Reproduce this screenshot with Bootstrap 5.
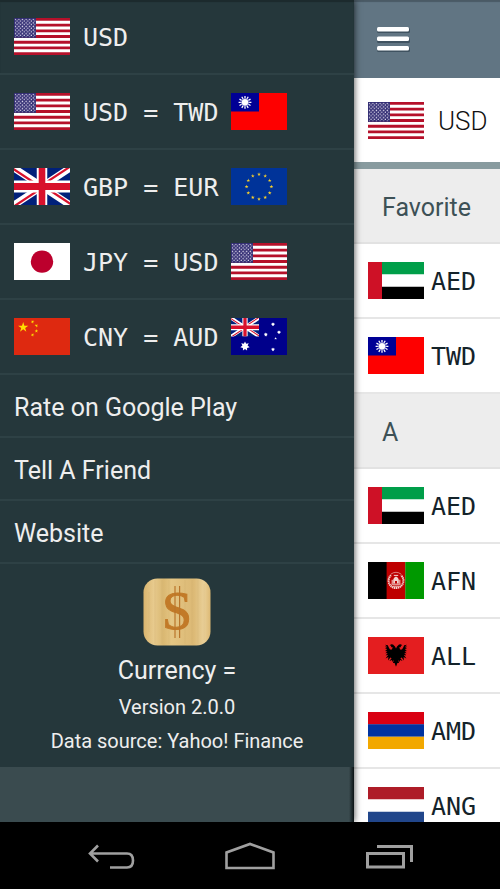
<!DOCTYPE html>
<html lang="en">
<head>
<meta charset="utf-8">
<meta name="viewport" content="width=device-width, initial-scale=1">
<title>Currency =</title>
<link href="https://cdn.jsdelivr.net/npm/bootstrap@5.3.0/dist/css/bootstrap.min.css" rel="stylesheet">
<style>
  body { font-family: Roboto, sans-serif; background: #000; }
  a { color: inherit; text-decoration: none; }
  .flag { width: 56px; height: 37px; flex: none; display: block; }
  .code { font-family: "DejaVu Sans Mono", monospace; font-size: 25px; line-height: 30px; white-space: nowrap; padding-top: 3px; }

  .panes { min-height: 0; }
  .drawer { width: 70.8%; flex: none; z-index: 1; background: #3a4b4f linear-gradient(to left, #0a1214, #3a4b4f 5px); color: #eee; box-shadow: 0 0 7px rgba(0,0,0,.75); }
  .drawer-row { background: #25373b; border-bottom: 2px solid #2e4145; padding: 0 14px; gap: 13px; }
  .drawer-row:first-child { box-shadow: inset 0 2px 1px #1c2a2d; }
  .pair-row { height: 75px; }
  .text-row { height: 63px; padding-top: 4px; font-size: 25px; line-height: 30px; }
  .drawer-about { background: #25373b; padding: 14px 0 13px; font-size: 20px; line-height: 26px; }
  .app-icon { width: 68px; height: 68px; }
  .app-name { font-size: 25px; line-height: 30px; margin-top: 10px; }

  .topbar { height: 78px; background: #617583; padding: 0 22px; box-shadow: inset 0 2px 1px #4a5a65; }
  .menu-icon { width: 34px; height: 27px; display: block; }
  .base-row { height: 91px; border-bottom: 7px solid #889b9f; padding: 0 14px; gap: 14px; color: #111; font-size: 26px; font-weight: 300; }
  .base-row span { padding-top: 3px; }
  .section-row { height: 75px; background: #ededed; border-bottom: 2px solid #e2e2e2; padding: 4px 28px 0; color: #3d5156; font-size: 25px; }
  .money-row { height: 75px; background: #fff; border-bottom: 2px solid #e6e6e6; padding: 0 14px; gap: 7px; color: #14232a; }

  .sysbar { height: 67px; flex: none; background: #000; padding: 0 42px; }
  .sysbar svg { display: block; width: 52px; height: 32px; fill: none; stroke: #a0a0a0; stroke-width: 3; }
</style>
<script src="https://cdn.jsdelivr.net/npm/bootstrap@5.3.0/dist/js/bootstrap.bundle.min.js"></script>
</head>
<body class="vh-100 d-flex flex-column overflow-hidden">

<svg width="0" height="0" class="position-absolute" aria-hidden="true">
  <defs>
    <polygon id="star" points="0,-1 .225,-.309 .951,-.309 .363,.118 .588,.809 0,.382 -.588,.809 -.363,.118 -.951,-.309 -.225,-.309"/>
    <polygon id="star7" points="0,-1 .24,-.5 .78,-.62 .54,-.12 .97,.22 .43,.35 .43,.9 0,.56 -.43,.9 -.43,.35 -.97,.22 -.54,-.12 -.78,-.62 -.24,-.5"/>
    <pattern id="dots" width="3.6" height="3.6" patternUnits="userSpaceOnUse">
      <circle cx="1.3" cy="1.3" r=".75" fill="#e4e0f0"/><circle cx="3.1" cy="3.1" r=".75" fill="#e4e0f0"/>
    </pattern>
    <clipPath id="ukclip"><path d="M28,18.5h28v18.5zv18.5h-28zh-28v-18.5zv-18.5h28z"/></clipPath>
    <clipPath id="ukbox"><path d="M0,0h56v37H0z"/></clipPath>
    <symbol id="us" viewBox="0 0 56 37">
      <path fill="#fff" d="M0,0h56v37H0z"/>
      <path stroke="#b5102a" stroke-width="2.85" d="M0,1.42h56M0,7.11h56M0,12.8h56M0,18.5h56M0,24.2h56M0,29.9h56M0,35.58h56"/>
      <path fill="#312c72" d="M0,0h22v19.9H0z"/><path fill="url(#dots)" d="M.8,.8h20.6v18.4H.8z"/>
    </symbol>
    <symbol id="uk" viewBox="0 0 56 37">
      <g clip-path="url(#ukbox)">
        <path fill="#00207a" d="M0,0h56v37H0z"/>
        <path stroke="#fff" stroke-width="7" d="M0,0L56,37M56,0L0,37"/>
        <path stroke="#d8112c" stroke-width="4.4" clip-path="url(#ukclip)" d="M0,0L56,37M56,0L0,37"/>
        <path stroke="#fff" stroke-width="12" d="M0,18.5h56"/><path stroke="#fff" stroke-width="10.5" d="M28,0v37"/>
        <path stroke="#d8112c" stroke-width="7" d="M0,18.5h56"/><path stroke="#d8112c" stroke-width="6.6" d="M28,0v37"/>
      </g>
    </symbol>
    <symbol id="tw" viewBox="0 0 56 37">
      <path fill="#fe0000" d="M0,0h56v37H0z"/><path fill="#000095" d="M0,0h28v18.5H0z"/>
      <g transform="translate(14 9.3)">
        <path stroke="#fff" stroke-width="1.3" d="M0,-6.4V6.4M-6.4,0H6.4M3.2,-5.54L-3.2,5.54M5.54,-3.2L-5.54,3.2M-3.2,-5.54L3.2,5.54M-5.54,-3.2L5.54,3.2"/>
        <circle r="3.8" fill="#fff" stroke="#000095" stroke-width=".5"/>
      </g>
    </symbol>
    <symbol id="eu" viewBox="0 0 56 37">
      <path fill="#003399" d="M0,0h56v37H0z"/>
      <g fill="#f7d02c" transform="translate(28 18.7)">
        <use href="#star" transform="translate(0 -12.4) scale(2)"/><use href="#star" transform="translate(6.2 -10.7) scale(2)"/>
        <use href="#star" transform="translate(10.7 -6.2) scale(2)"/><use href="#star" transform="translate(12.4 0) scale(2)"/>
        <use href="#star" transform="translate(10.7 6.2) scale(2)"/><use href="#star" transform="translate(6.2 10.7) scale(2)"/>
        <use href="#star" transform="translate(0 12.4) scale(2)"/><use href="#star" transform="translate(-6.2 10.7) scale(2)"/>
        <use href="#star" transform="translate(-10.7 6.2) scale(2)"/><use href="#star" transform="translate(-12.4 0) scale(2)"/>
        <use href="#star" transform="translate(-10.7 -6.2) scale(2)"/><use href="#star" transform="translate(-6.2 -10.7) scale(2)"/>
      </g>
    </symbol>
    <symbol id="jp" viewBox="0 0 56 37"><path fill="#fff" d="M0,0h56v37H0z"/><circle cx="28" cy="18.6" r="11.2" fill="#bc002d"/></symbol>
    <symbol id="cn" viewBox="0 0 56 37">
      <path fill="#de2910" d="M0,0h56v37H0z"/>
      <g fill="#ffde00">
        <use href="#star" transform="translate(9.2 9.3) scale(5.4)"/>
        <use href="#star" transform="translate(18.6 3.8) rotate(20) scale(1.9)"/><use href="#star" transform="translate(22.4 7.6) rotate(45) scale(1.9)"/>
        <use href="#star" transform="translate(22.4 13) scale(1.9)"/><use href="#star" transform="translate(18.6 16.9) rotate(20) scale(1.9)"/>
      </g>
    </symbol>
    <symbol id="au" viewBox="0 0 56 37">
      <path fill="#00008b" d="M0,0h56v37H0z"/>
      <use href="#uk" width="28" height="18.5"/>
      <g fill="#fff">
        <use href="#star7" transform="translate(14 28.2) scale(4.8)"/><use href="#star7" transform="translate(42 6.3) scale(2)"/>
        <use href="#star7" transform="translate(34.8 16.6) scale(2)"/><use href="#star7" transform="translate(48 14.2) scale(2)"/>
        <use href="#star" transform="translate(44.6 20.4) scale(1.5)"/><use href="#star7" transform="translate(42 31.4) scale(2)"/>
      </g>
    </symbol>
    <symbol id="ae" viewBox="0 0 56 37">
      <path fill="#fff" d="M0,0h56v37H0z"/><path fill="#009e49" d="M14,0h42v12.3H14z"/><path d="M14,24.7h42V37H14z"/><path fill="#ce1126" d="M0,0h14v37H0z"/>
    </symbol>
    <symbol id="af" viewBox="0 0 56 37">
      <path d="M0,0h19v37H0z"/><path fill="#be0000" d="M18.6,0h18.9v37H18.6z"/><path fill="#009900" d="M37.3,0H56v37H37.3z"/>
      <g fill="none" stroke="#f3d5d0" transform="translate(28 18.8)">
        <path stroke-width="2" stroke-dasharray="1.4 .5" d="M-5,-5.6A7.4,7.4 0 1 0 5,-5.6"/>
        <path stroke-width=".6" d="M-5.2,-6.6Q0,-10.4 5.2,-6.6"/>
        <path stroke-width="1" d="M-4.6,3.4h9.2M-3.8,-1v4M3.8,-1v4M-3.4,5.4h6.8M-2.2,-5.4h4.4"/>
        <path fill="#f3d5d0" stroke="none" d="M-2.8,2.6V-1Q-2.4,-3.4 0,-4.4Q2.4,-3.4 2.8,-1V2.6H1V.2H-1V2.6z"/>
      </g>
    </symbol>
    <symbol id="al" viewBox="0 0 56 37">
      <path fill="#e41e20" d="M0,0h56v37H0z"/>
      <path transform="translate(28 7)" d="M0,4.6L1,2.4L3,.4L5,.2L6.3,1.6L4.8,1.8L5,3.2L3.4,3L4,5.4L6,5.6L7.2,3.4L8.2,1.2L11,.8L9,2.4L11.2,2.7L9,4L11,4.8L8.8,5.6L11,7L8.6,7.4L10.8,9.2L8.3,9.1L10.4,11.4L7.8,10.8L10.4,14.6L7.6,12.9L8,16.6L5.6,13.6L4.4,14.2L6.6,17L4,16L3.6,18L2.2,15.8L3,19L1.4,19L0,22.8L-1.4,19L-3,19L-2.2,15.8L-3.6,18L-4,16L-6.6,17L-4.4,14.2L-5.6,13.6L-8,16.6L-7.6,12.9L-10.4,14.6L-7.8,10.8L-10.4,11.4L-8.3,9.1L-10.8,9.2L-8.6,7.4L-11,7L-8.8,5.6L-11,4.8L-9,4L-11.2,2.7L-9,2.4L-11,.8L-8.2,1.2L-7.2,3.4L-6,5.6L-4,5.4L-3.4,3L-5,3.2L-4.8,1.8L-6.3,1.6L-5,.2L-3,.4L-1,2.4z"/>
    </symbol>
    <symbol id="am" viewBox="0 0 56 37"><path fill="#d90012" d="M0,0h56v12.4H0z"/><path fill="#0033a0" d="M0,12.3h56v12.5H0z"/><path fill="#f2a800" d="M0,24.7h56V37H0z"/></symbol>
    <symbol id="nl" viewBox="0 0 56 37"><path fill="#fff" d="M0,0h56v37H0z"/><path fill="#ae1c28" d="M0,0h56v12.3H0z"/><path fill="#21468b" d="M0,24.7h56V37H0z"/></symbol>
  </defs>
</svg>

<main class="panes d-flex flex-fill overflow-hidden">
  <nav class="drawer position-relative d-flex flex-column" aria-label="Menu">
    <a href="#" class="drawer-row pair-row d-flex align-items-center"><svg class="flag"><use href="#us"/></svg><span class="code">USD</span></a>
    <a href="#" class="drawer-row pair-row d-flex align-items-center"><svg class="flag"><use href="#us"/></svg><span class="code">USD = TWD</span><svg class="flag"><use href="#tw"/></svg></a>
    <a href="#" class="drawer-row pair-row d-flex align-items-center"><svg class="flag"><use href="#uk"/></svg><span class="code">GBP = EUR</span><svg class="flag"><use href="#eu"/></svg></a>
    <a href="#" class="drawer-row pair-row d-flex align-items-center"><svg class="flag"><use href="#jp"/></svg><span class="code">JPY = USD</span><svg class="flag"><use href="#us"/></svg></a>
    <a href="#" class="drawer-row pair-row d-flex align-items-center"><svg class="flag"><use href="#cn"/></svg><span class="code">CNY = AUD</span><svg class="flag"><use href="#au"/></svg></a>
    <a href="#" class="drawer-row text-row d-flex align-items-center">Rate on Google Play</a>
    <a href="#" class="drawer-row text-row d-flex align-items-center">Tell A Friend</a>
    <a href="#" class="drawer-row text-row d-flex align-items-center">Website</a>
    <div class="drawer-about d-flex flex-column align-items-center text-nowrap">
      <svg class="app-icon" viewBox="0 0 68 68" role="img" aria-label="Currency logo">
        <defs><linearGradient id="wood">
          <stop offset="0" stop-color="#d9b46e"/><stop offset=".15" stop-color="#e7ca8d"/><stop offset=".3" stop-color="#dab872"/><stop offset=".42" stop-color="#e5c684"/>
          <stop offset=".6" stop-color="#dfbe7b"/><stop offset=".75" stop-color="#dcb975"/><stop offset=".9" stop-color="#e9cf97"/><stop offset="1" stop-color="#ddb974"/>
        </linearGradient></defs>
        <rect x=".5" y=".5" width="67" height="67" rx="14" fill="url(#wood)"/>
        <path stroke="#b8934d" stroke-opacity=".15" stroke-width=".7" d="M6,14v40M12,2v64M19,2v64M26,2v64M42,2v64M49,2v64M55,2v64M61,6v56"/>
        <text x="34" y="51" text-anchor="middle" font-family="Liberation Serif, serif" font-size="54" fill="#c27a28" stroke="#c27a28" stroke-width="1">S</text>
        <path stroke="#b9762c" stroke-width="1.2" d="M32,8v52M36.6,8v52"/>
      </svg>
      <div class="app-name">Currency =</div>
      <div class="mt-2">Version 2.0.0</div>
      <div class="mt-2">Data source: Yahoo! Finance</div>
    </div>
  </nav>

  <section class="flex-fill bg-white" aria-label="Currencies">
    <header class="topbar d-flex align-items-center">
      <button type="button" class="btn p-0 border-0" aria-label="Open menu">
        <svg class="menu-icon" viewBox="0 0 34 27"><g fill="#3f5260"><rect x="1" y="2" width="33" height="5" rx="1.5"/><rect x="1" y="12" width="33" height="5" rx="1.5"/><rect x="1" y="21" width="33" height="5" rx="1.5"/></g><g fill="#fff"><rect x="1" y="1" width="32" height="4.5" rx="1.5"/><rect x="1" y="10.5" width="32" height="4.5" rx="1.5"/><rect x="1" y="20" width="32" height="4.5" rx="1.5"/></g></svg>
      </button>
    </header>
    <a href="#" class="base-row d-flex align-items-center"><svg class="flag"><use href="#us"/></svg><span>USD</span></a>
    <div class="section-row d-flex align-items-center">Favorite</div>
    <a href="#" class="money-row d-flex align-items-center"><svg class="flag"><use href="#ae"/></svg><span class="code">AED</span></a>
    <a href="#" class="money-row d-flex align-items-center"><svg class="flag"><use href="#tw"/></svg><span class="code">TWD</span></a>
    <div class="section-row d-flex align-items-center">A</div>
    <a href="#" class="money-row d-flex align-items-center"><svg class="flag"><use href="#ae"/></svg><span class="code">AED</span></a>
    <a href="#" class="money-row d-flex align-items-center"><svg class="flag"><use href="#af"/></svg><span class="code">AFN</span></a>
    <a href="#" class="money-row d-flex align-items-center"><svg class="flag"><use href="#al"/></svg><span class="code">ALL</span></a>
    <a href="#" class="money-row d-flex align-items-center"><svg class="flag"><use href="#am"/></svg><span class="code">AMD</span></a>
    <a href="#" class="money-row d-flex align-items-center"><svg class="flag"><use href="#nl"/></svg><span class="code">ANG</span></a>
  </section>
</main>

<footer class="sysbar d-flex align-items-center justify-content-around">
  <button type="button" class="btn p-0 border-0" aria-label="Back"><svg viewBox="0 0 52 32"><path stroke-width="2.6" d="M13,5.5L5,13.5L13,21.5M5,13.5H42Q48,13.5 48,20.5Q48,27.5 42,27.5H25"/></svg></button>
  <button type="button" class="btn p-0 border-0" aria-label="Home"><svg viewBox="0 0 52 32"><path stroke-width="2.6" d="M2.5,28V12.5L26,4L49.5,12.5V28z"/></svg></button>
  <button type="button" class="btn p-0 border-0" aria-label="Recent apps"><svg viewBox="0 0 52 32"><path d="M4.5,13.5h36v13.5h-36zM14,6.5h34.5V22"/></svg></button>
</footer>
</body>
</html>
